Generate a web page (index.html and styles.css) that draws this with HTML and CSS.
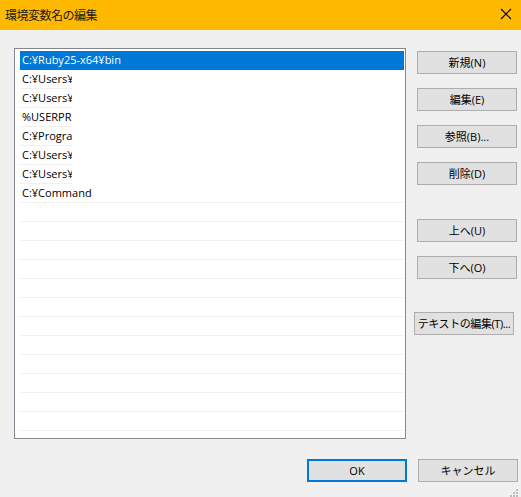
FILE: index.html
```html
<!DOCTYPE html>
<html lang="ja">
<head>
<meta charset="utf-8">
<title>環境変数名の編集</title>
<link rel="stylesheet" href="styles.css">
</head>
<body>
<div class="window">
  <div class="titlebar">
    <span class="title">環境変数名の編集</span>
    <svg class="close" width="12" height="12" viewBox="0 0 12 12"><path d="M1 1 L11 11 M11 1 L1 11" stroke="#000" stroke-width="1.1" fill="none"/></svg>
  </div>
  <div class="content">
    <div class="main">
      <div class="list">
        <div class="row selected full"><span>C:¥Ruby25-x64¥bin</span></div>
        <div class="row short"><span>C:¥Users¥</span></div>
        <div class="row short"><span>C:¥Users¥</span></div>
        <div class="row short"><span>%USERPR</span></div>
        <div class="row short"><span>C:¥Progra</span></div>
        <div class="row short"><span>C:¥Users¥</span></div>
        <div class="row short"><span>C:¥Users¥</span></div>
        <div class="row full"><span>C:¥Command</span></div>
        <div class="row full"></div>
        <div class="row full"></div>
        <div class="row full"></div>
        <div class="row full"></div>
        <div class="row full"></div>
        <div class="row full"></div>
        <div class="row full"></div>
        <div class="row full"></div>
        <div class="row full"></div>
        <div class="row full"></div>
        <div class="row full"></div>
        <div class="row full"></div>
        <div class="row full"></div>
      </div>
      <div class="side">
        <button class="btn first">新規(N)</button>
        <button class="btn">編集(E)</button>
        <button class="btn">参照(B)...</button>
        <button class="btn">削除(D)</button>
        <button class="btn group">上へ(U)</button>
        <button class="btn">下へ(O)</button>
        <button class="btn group text-edit">テキストの編集(T)...</button>
      </div>
    </div>
    <div class="footer">
      <button class="btn ok">OK</button>
      <button class="btn">キャンセル</button>
    </div>
  </div>
  <svg class="grip" width="10" height="8" viewBox="0 0 10 8">
    <rect x="8" y="0" width="2" height="2" fill="#bcbcbc"/>
    <rect x="5" y="3" width="2" height="2" fill="#bcbcbc"/>
    <rect x="8" y="3" width="2" height="2" fill="#bcbcbc"/>
    <rect x="2" y="6" width="2" height="2" fill="#bcbcbc"/>
    <rect x="5" y="6" width="2" height="2" fill="#bcbcbc"/>
    <rect x="8" y="6" width="2" height="2" fill="#bcbcbc"/>
  </svg>
</div>
</body>
</html>
```
FILE: styles.css
```css
html, body {
  margin: 0;
  padding: 0;
  background: #f0f0f0;
}
body {
  font-family: "Open Sans", "Noto Sans CJK JP", sans-serif;
  font-size: 11px;
  color: #000;
}
.window {
  position: relative;
  width: 521px;
  height: 497px;
  overflow: hidden;
}
.titlebar {
  height: 30px;
  background: #ffb900;
  display: flex;
  align-items: center;
  justify-content: space-between;
  padding: 0 9px 2px 5px;
  box-sizing: border-box;
}
.title {
  font-family: "Noto Sans CJK JP", sans-serif;
  font-size: 12px;
  color: #1a1a1a;
  letter-spacing: -0.5px;
}
.close {
  display: block;
}
.content {
  padding: 18px 0 0 14px;
}
.main {
  display: flex;
  align-items: flex-start;
}
.list {
  width: 392px;
  height: 391px;
  box-sizing: border-box;
  border: 1px solid #828790;
  background: #fff;
  padding: 2px 1px 0 5px;
  overflow: hidden;
}
.row {
  height: 19px;
  box-sizing: border-box;
  border-bottom: 1px solid #f0f0f0;
  line-height: 18px;
  padding-left: 2px;
  white-space: nowrap;
  color: #000;
  font-size: 11px;
}
.row.short {
  width: 52px;
  overflow: hidden;
}
.row.selected {
  background: #0078d7;
  color: #fff;
  border-bottom-color: #0078d7;
}
.side {
  display: flex;
  flex-direction: column;
  align-items: flex-start;
  margin-left: 11px;
  padding-top: 3px;
}
.btn {
  width: 100px;
  height: 23px;
  box-sizing: border-box;
  border: 1px solid #adadad;
  background: #e1e1e1;
  font-family: "Open Sans", "Noto Sans CJK JP", sans-serif;
  font-size: 11px;
  color: #000;
  padding: 0;
  margin: 14px 0 0 0;
  line-height: 20px;
  white-space: nowrap;
}
.btn.first {
  margin-top: 0;
}
.btn.group {
  margin-top: 34px;
}
.btn.text-edit {
  margin-top: 33px;
  margin-left: -3px;
  letter-spacing: -0.4px;
}
.footer {
  display: flex;
  gap: 11px;
  margin: 20px 0 0 293px;
}
.footer .btn {
  margin: 0;
}
.btn.ok {
  border: 2px solid #0078d7;
}
.grip {
  position: absolute;
  right: 3px;
  bottom: 0;
}
```
